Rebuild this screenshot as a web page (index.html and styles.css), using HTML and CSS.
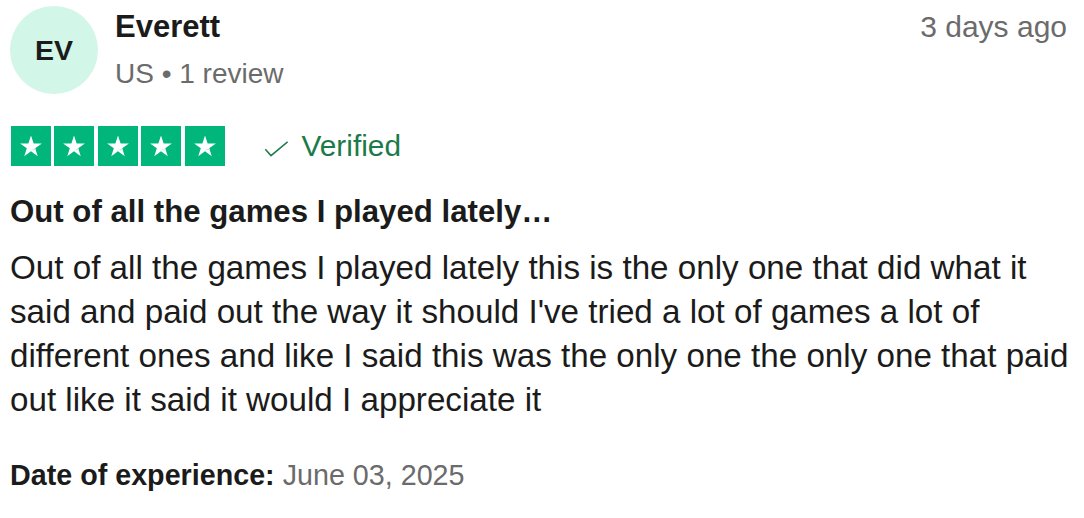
FILE: index.html
```html
<!DOCTYPE html>
<html lang="en">
<head>
<meta charset="utf-8">
<title>Review</title>
<link rel="stylesheet" href="styles.css">
</head>
<body>
<article class="review">
  <header class="review-header">
    <div class="avatar">EV</div>
    <div class="consumer">
      <div class="name">Everett</div>
      <div class="meta">US • 1 review</div>
    </div>
    <time class="ago">3 days ago</time>
  </header>
  <div class="rating-row">
    <div class="stars">
      <span class="star"><svg viewBox="0 0 24 24"><path d="M12 3.6l2.1 6.3h6.6l-5.35 3.9 2.05 6.3L12 16.2l-5.4 3.9 2.05-6.3L3.3 9.9h6.6z" fill="#fff"/><path d="M15.35 13.8l0.55 1.7-3.9-0.3z" fill="#cdeee0"/></svg></span>
      <span class="star"><svg viewBox="0 0 24 24"><path d="M12 3.6l2.1 6.3h6.6l-5.35 3.9 2.05 6.3L12 16.2l-5.4 3.9 2.05-6.3L3.3 9.9h6.6z" fill="#fff"/><path d="M15.35 13.8l0.55 1.7-3.9-0.3z" fill="#cdeee0"/></svg></span>
      <span class="star"><svg viewBox="0 0 24 24"><path d="M12 3.6l2.1 6.3h6.6l-5.35 3.9 2.05 6.3L12 16.2l-5.4 3.9 2.05-6.3L3.3 9.9h6.6z" fill="#fff"/><path d="M15.35 13.8l0.55 1.7-3.9-0.3z" fill="#cdeee0"/></svg></span>
      <span class="star"><svg viewBox="0 0 24 24"><path d="M12 3.6l2.1 6.3h6.6l-5.35 3.9 2.05 6.3L12 16.2l-5.4 3.9 2.05-6.3L3.3 9.9h6.6z" fill="#fff"/><path d="M15.35 13.8l0.55 1.7-3.9-0.3z" fill="#cdeee0"/></svg></span>
      <span class="star"><svg viewBox="0 0 24 24"><path d="M12 3.6l2.1 6.3h6.6l-5.35 3.9 2.05 6.3L12 16.2l-5.4 3.9 2.05-6.3L3.3 9.9h6.6z" fill="#fff"/><path d="M15.35 13.8l0.55 1.7-3.9-0.3z" fill="#cdeee0"/></svg></span>
    </div>
    <div class="verified">
      <svg class="check" viewBox="0 0 24 16"><path d="M1.3 8.3L7 14.6 23.6 0.8" fill="none" stroke="#1c7a4a" stroke-width="1.5"/></svg>
      <span>Verified</span>
    </div>
  </div>
  <h2 class="title">Out of all the games I played lately…</h2>
  <p class="body">Out of all the games I played lately this is the only one that did what it said and paid out the way it should I've tried a lot of games a lot of different ones and like I said this was the only one the only one that paid out like it said it would I appreciate it</p>
  <p class="experience"><strong>Date of experience:</strong> <span class="date">June 03, 2025</span></p>
</article>
</body>
</html>
```

FILE: styles.css
```css
* { box-sizing: border-box; }
html, body { margin: 0; background: #fff; }
body {
  font-family: "Liberation Sans", Arial, Helvetica, sans-serif;
  color: #1b1b1b;
}
.review {
  padding: 6px 10px 0 10px;
}
.review-header {
  display: flex;
  align-items: flex-start;
}
.avatar {
  width: 88px;
  height: 88px;
  border-radius: 50%;
  background: #d2f6e8;
  display: flex;
  align-items: center;
  justify-content: center;
  font-weight: 700;
  font-size: 28.5px;
  color: #1b1b1b;
  flex: none;
}
.consumer {
  margin-left: 17px;
  flex: 1;
}
.name {
  font-weight: 700;
  font-size: 31px;
  line-height: 40px;
  margin-top: 1px;
}
.meta {
  font-size: 28px;
  line-height: 40px;
  color: #6b6b6b;
  margin-top: 7px;
}
.ago {
  font-size: 30px;
  line-height: 40px;
  color: #6b6b6b;
  margin-top: 1px;
  margin-right: 7px;
}
.rating-row {
  display: flex;
  align-items: center;
  margin-top: 32px;
}
.stars {
  display: flex;
  gap: 3.4px;
  margin-left: 1px;
}
.star {
  width: 40px;
  height: 40px;
  background: #00b67a;
  display: flex;
  align-items: center;
  justify-content: center;
}
.star svg { width: 30px; height: 30px; }
.verified {
  display: flex;
  align-items: center;
  margin-left: 39px;
  color: #1c7a4a;
  font-size: 29.8px;
  line-height: 40px;
}
.check { width: 24px; height: 16px; margin-right: 14px; margin-top: 6px; }
.title {
  font-size: 31.2px;
  font-weight: 700;
  line-height: 40px;
  margin: 26px 0 0 0;
}
.body {
  font-size: 33.2px;
  line-height: 44px;
  margin: 14px 0 0 0;
}
.experience {
  font-size: 28.7px;
  line-height: 40px;
  margin: 33px 0 0 0;
}
.date { color: #6b6b6b; }
```
